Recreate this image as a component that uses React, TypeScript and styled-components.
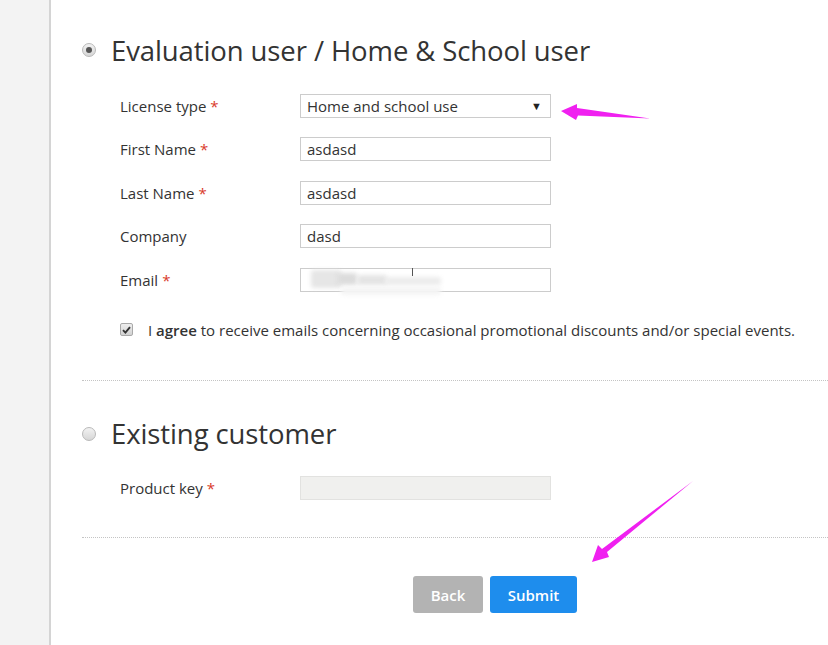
import React from "react";
import styled, {createGlobalStyle} from "styled-components";

const GlobalStyle = createGlobalStyle`
  html, body {
    margin: 0;
    padding: 0;
    background: #fff;
  }
  body {
    font-family: "Open Sans", "Liberation Sans", Arial, sans-serif;
    color: #333;
  }
`

const Page = styled.div`
  position: relative;
  display: flex;
  width: 828px;
  height: 645px;
  overflow: hidden;
`

const Sidebar = styled.div`
  width: 49px;
  flex: none;
  background: #f3f3f3;
  border-right: 2px solid #d4d4d4;
`

const Content = styled.div`
  flex: 1;
  padding: 30px 0 0 31px;
`

const Section = styled.section<{ $top?: number }>`
  display: flex;
  flex-direction: column;
  margin-top: ${p => p.$top || 0}px;
`

const Heading = styled.h2`
  display: flex;
  align-items: center;
  gap: 15px;
  margin: 0;
  height: 40px;
  font-size: 27.5px;
  font-weight: 400;
  color: #333;
  letter-spacing: -0.1px;
`

const Radio = styled.span<{ $checked?: boolean }>`
  position: relative;
  width: 14px;
  height: 14px;
  border-radius: 50%;
  border: 1px solid #b9b9b9;
  background: linear-gradient(#f2f2f2, #d6d6d6);
  box-sizing: border-box;
  flex: none;

  &::after {
    content: "";
    display: ${p => (p.$checked ? "block" : "none")};
    position: absolute;
    left: 3px;
    top: 3px;
    width: 6px;
    height: 6px;
    border-radius: 50%;
    background: #555;
  }
`

const Form = styled.div<{ $top: number }>`
  display: grid;
  grid-template-columns: 180px 251px;
  grid-auto-rows: 43.5px;
  align-items: center;
  margin: ${p => p.$top}px 0 0 38px;
`

const Label = styled.label`
  font-size: 15px;
  color: #333;
`

const Star = styled.span`
  color: #d9392b;
  margin-left: 4px;
`

const Field = styled.div<{ $disabled?: boolean }>`
  position: relative;
  display: flex;
  align-items: center;
  justify-content: space-between;
  box-sizing: border-box;
  height: 24px;
  padding: 0 8px 0 6px;
  border: 1px solid ${p => (p.$disabled ? "#e2e2e0" : "#cccccc")};
  background: ${p => (p.$disabled ? "#f0f0ee" : "#fff")};
  font-size: 15px;
  color: #333;
`

const Caret = styled.span`
  font-size: 11px;
  color: #222;
`

const Blur = styled.span<{ $x: number; $y: number; $w: number; $h: number; $c: string }>`
  position: absolute;
  left: ${p => p.$x}px;
  top: ${p => p.$y}px;
  width: ${p => p.$w}px;
  height: ${p => p.$h}px;
  background: ${p => p.$c};
  filter: blur(2px);
  border-radius: 3px;
`

const Cursor = styled.span`
  position: absolute;
  left: 111px;
  top: -1px;
  width: 1px;
  height: 8px;
  background: #555;
`

const Agree = styled.div`
  display: flex;
  align-items: center;
  gap: 15px;
  margin: 18px 0 0 38px;
  height: 20px;
  font-size: 15px;
  color: #333;

  b {
    font-weight: 600;
  }
`

const CheckBox = styled.span`
  display: flex;
  align-items: center;
  justify-content: center;
  width: 13px;
  height: 13px;
  box-sizing: border-box;
  border: 1px solid #a9a9a9;
  border-radius: 2px;
  background: linear-gradient(#eeeeee, #d2d2d2);
`

const Divider = styled.hr<{ $top: number }>`
  margin: ${p => p.$top}px 0 0 0;
  border: none;
  border-top: 1px dotted #c4c4c4;
  height: 0;
`

const Actions = styled.div`
  display: flex;
  gap: 7px;
  margin: 38px 0 0 331px;
`

const Button = styled.button<{ $primary?: boolean }>`
  width: ${p => (p.$primary ? 87 : 70)}px;
  height: 37px;
  padding: 0;
  border: none;
  border-radius: 3px;
  background: ${p => (p.$primary ? "#1e8ded" : "#b3b3b3")};
  color: #fff;
  font-family: "Open Sans", "Liberation Sans", Arial, sans-serif;
  font-size: 15px;
  font-weight: 600;
`

const Annotations = styled.svg`
  position: absolute;
  left: 0;
  top: 0;
  pointer-events: none;
`

const rows = [
  {label: "First Name", value: "asdasd", required: true},
  {label: "Last Name", value: "asdasd", required: true},
  {label: "Company", value: "dasd", required: false},
]

export default function App() {
  return (
    <>
      <GlobalStyle/>
      <Page>
        <Sidebar/>
        <Content>
          <Section>
            <Heading><Radio $checked/>Evaluation user / Home &amp; School user</Heading>
            <Form $top={14}>
              <Label>License type<Star>*</Star></Label>
              <Field>Home and school use<Caret>▼</Caret></Field>
              {rows.map(r => (
                <React.Fragment key={r.label}>
                  <Label>{r.label}{r.required && <Star>*</Star>}</Label>
                  <Field>{r.value}</Field>
                </React.Fragment>
              ))}
              <Label>Email<Star>*</Star></Label>
              <Field>
                <Blur $x={10} $y={1} $w={30} $h={18} $c="#e6e6e6"/>
                <Blur $x={36} $y={4} $w={20} $h={12} $c="#dcdcdc"/>
                <Blur $x={56} $y={6} $w={30} $h={10} $c="#e4e4e4"/>
                <Blur $x={84} $y={8} $w={56} $h={8} $c="#ececec"/>
                <Blur $x={40} $y={18} $w={100} $h={8} $c="#f4f4f4"/>
                <Cursor/>
              </Field>
            </Form>
            <Agree>
              <CheckBox>
                <svg width="9" height="8" viewBox="0 0 9 8">
                  <path d="M1 4.2 L3.4 6.6 L8 1.2" fill="none" stroke="#333" strokeWidth="1.9"/>
                </svg>
              </CheckBox>
              <span>I <b>agree</b> to receive emails concerning occasional promotional discounts and/or special events.</span>
            </Agree>
          </Section>
          <Divider $top={40}/>
          <Section $top={33}>
            <Heading><Radio/>Existing customer</Heading>
            <Form $top={13}>
              <Label>Product key<Star>*</Star></Label>
              <Field $disabled/>
            </Form>
          </Section>
          <Divider $top={27}/>
          <Actions>
            <Button>Back</Button>
            <Button $primary>Submit</Button>
          </Actions>
        </Content>
        <Annotations width="828" height="645" viewBox="0 0 828 645">
          <path d="M561 111 L577 104 L577 108 L650 118.5 L578 115.5 L576 120 Z" fill="#f020f0"/>
          <path d="M592 562 L598 545 L602 549 L693 481 L607 552 L609 557 Z" fill="#f020f0"/>
        </Annotations>
      </Page>
    </>
  )
}
